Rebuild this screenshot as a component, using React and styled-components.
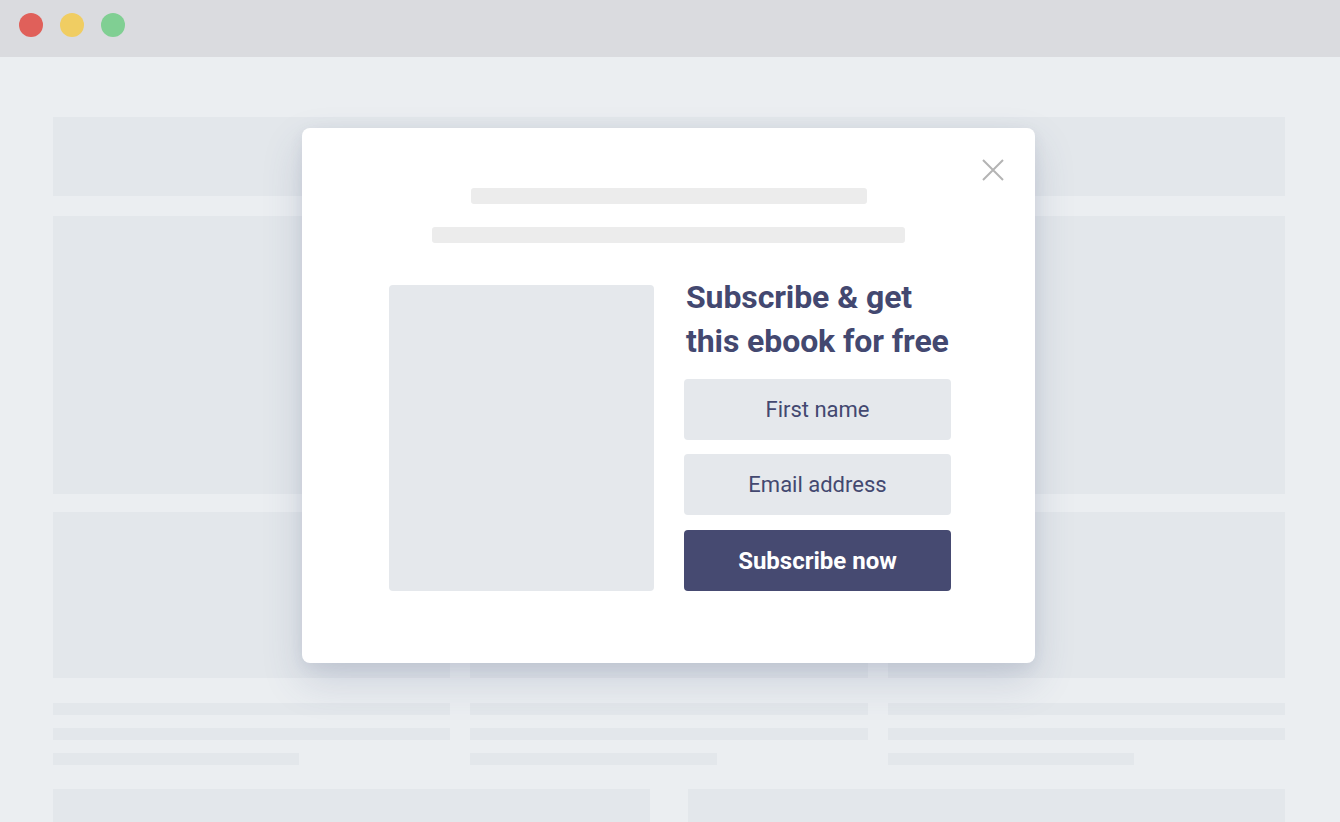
import React from "react";
import styled, { createGlobalStyle } from "styled-components";

const GlobalStyle = createGlobalStyle`
  html, body {
    margin: 0;
    padding: 0;
    background: #ebeef1;
    font-family: Roboto, "Liberation Sans", sans-serif;
  }
  * { box-sizing: border-box; }
`;

export default function App() {
  return (
    <>
      <GlobalStyle />
      <Window>
        <TitleBar>
          <Dot color="#e0605a" />
          <Dot color="#f0cd62" />
          <Dot color="#80cf93" />
        </TitleBar>
        <Page>
          <Block height={79} />
          <Columns top={20}>
            <Block height={278} />
            <Block height={278} />
            <Block height={278} />
          </Columns>
          <Columns top={18}>
            <Block height={166} />
            <Block height={166} />
            <Block height={166} />
          </Columns>
          <Columns top={25}>
            {[0, 1, 2].map((i) => (
              <TextCol key={i}>
                <Line />
                <Line />
                <Line short />
              </TextCol>
            ))}
          </Columns>
          <Bottom>
            <Block height={40} />
            <Block height={40} />
          </Bottom>
        </Page>

        <Modal>
          <Close aria-label="close">
            <svg width="24" height="24" viewBox="0 0 24 24">
              <path
                d="M2 2 L22 22 M22 2 L2 22"
                stroke="#b4b4b4"
                strokeWidth="2"
                fill="none"
              />
            </svg>
          </Close>
          <Bar width={396} />
          <Bar width={473} top={23} />
          <Content>
            <Cover />
            <Form>
              <Heading>
                Subscribe &amp; get
                <br />
                this ebook for free
              </Heading>
              <Field>First name</Field>
              <Field>Email address</Field>
              <Submit>Subscribe now</Submit>
            </Form>
          </Content>
        </Modal>
      </Window>
    </>
  );
}

const Window = styled.div`
  position: relative;
  width: 1340px;
  height: 822px;
  overflow: hidden;
  background: #ebeef1;
`;

const TitleBar = styled.div`
  height: 57px;
  background: #dadbdf;
  display: flex;
  align-items: flex-start;
  gap: 17px;
  padding: 13px 0 0 19px;
`;

const Dot = styled.span`
  width: 24px;
  height: 24px;
  border-radius: 50%;
  background: ${(p) => p.color};
`;

const Page = styled.div`
  padding: 60px 55px 0 53px;
  display: flex;
  flex-direction: column;
`;

const Block = styled.div`
  height: ${(p) => p.height}px;
  background: #e3e7eb;
`;

const Columns = styled.div`
  display: grid;
  grid-template-columns: repeat(3, 1fr);
  column-gap: 20px;
  margin-top: ${(p) => p.top}px;
`;

const TextCol = styled.div`
  display: flex;
  flex-direction: column;
  gap: 13px;
`;

const Line = styled.div`
  height: 12px;
  width: ${(p) => (p.short ? "62%" : "100%")};
  background: #e3e7eb;
`;

const Bottom = styled.div`
  display: grid;
  grid-template-columns: 1fr 1fr;
  column-gap: 38px;
  margin-top: 24px;
`;

const Modal = styled.div`
  position: absolute;
  left: 302px;
  top: 128px;
  width: 733px;
  height: 535px;
  background: #ffffff;
  border-radius: 8px;
  box-shadow: 0 18px 40px rgba(60, 80, 120, 0.18),
    0 4px 14px rgba(60, 80, 120, 0.08);
  display: flex;
  flex-direction: column;
  align-items: center;
  padding-top: 60px;
`;

const Close = styled.button`
  position: absolute;
  top: 30px;
  right: 30px;
  width: 24px;
  height: 24px;
  padding: 0;
  border: none;
  background: none;
  display: flex;
`;

const Bar = styled.div`
  width: ${(p) => p.width}px;
  height: 16px;
  border-radius: 3px;
  background: #ececec;
  margin-top: ${(p) => p.top || 0}px;
`;

const Content = styled.div`
  display: flex;
  gap: 30px;
  margin-top: 42px;
  margin-left: 3px;
`;

const Cover = styled.div`
  width: 265px;
  height: 306px;
  border-radius: 4px;
  background: #e5e8ec;
`;

const Form = styled.div`
  width: 267px;
  display: flex;
  flex-direction: column;
`;

const Heading = styled.h2`
  margin: -10px 0 16px 2px;
  font-size: 32px;
  line-height: 44px;
  font-weight: 700;
  color: #434870;
  white-space: nowrap;
  letter-spacing: -0.1px;
`;

const Field = styled.div`
  height: 61px;
  border-radius: 4px;
  background: #e5e8ec;
  color: #434870;
  font-size: 22px;
  font-weight: 400;
  display: flex;
  align-items: center;
  justify-content: center;
  margin-bottom: 14px;
`;

const Submit = styled.button`
  height: 61px;
  border: none;
  border-radius: 4px;
  background: #464a71;
  color: #ffffff;
  font-family: Roboto, "Liberation Sans", sans-serif;
  font-size: 24px;
  font-weight: 700;
  margin-top: 1px;
`;
